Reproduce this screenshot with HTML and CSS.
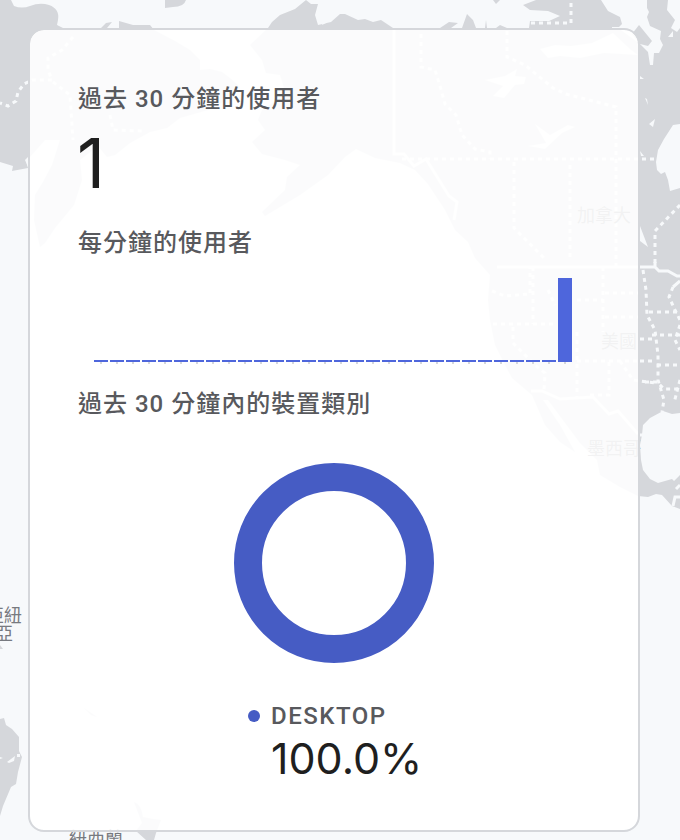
FILE: index.html
```html
<!DOCTYPE html>
<html lang="zh-Hant">
<head>
<meta charset="utf-8">
<title>過去 30 分鐘的使用者</title>
<link rel="stylesheet" href="styles.css">
</head>
<body>
<main class="stage">
  <svg class="map" viewBox="0 0 680 840" aria-hidden="true">
    <g class="land">
      <path d="M0 0H11L14 6Q22 9 30 6Q40 2 49 5Q60 9 58 20L57 25L63 28H101L106 23L112 22L107 28H119V21L133 25H150L154 30L175 41L190 50L200 60V70L210 69L222 72L230 78L240 87L232 97L208 110L180 118L167 128L150 132L130 143L115 155L107 157L98 146L80 160L82 180L74 205L55 228L45 243L40 247L34 220L35 195L43 182L52 165L60 140L45 140L30 157L26 160L28 168L12 171L13 166L0 162Z"/>
      <path d="M165 0H186Q184 7 173 7L165 8Z"/>
      <path d="M268 28L272 22L280 15L295 9L306 0L311 4H318L315 15L318 25L331 22L340 14H345L358 20L365 19L373 22L381 20L393 28H440L449 22L458 23L451 28H462L467 14L473 20L476 28H485L486 20L487 28H496L500 25L507 28H529L530 21H549L560 16L548 11L530 10L523 5L536 0H601L608 11L620 17L622 24L618 28L640 44L648 52L650 65H653L654 53H659L663 45L660 39L661 31L650 26L647 17L649 12L647 8V0H668L667 10L675 20L671 28L677 32L680 28V413L672 414L663 411L650 418L643 425L642 435L640 445L641 460L643 470L650 479L658 483L672 479L674 481L680 475V509L672 506L662 495L656 494L648 497L638 496L620 487L600 475L597 460L580 443L548 400L543 400L560 425L575 452L560 442L545 425L532 395L512 378L505 365L495 345L490 320L488 300L490 275L475 258L468 242L455 230L445 210L428 184L415 170L400 163L375 158L356 149L345 157L328 175L300 195L265 216L262 212L285 190L287 177L300 165L285 160L262 154L252 142L265 130L258 120L262 110L286 94L280 75L266 73L262 60L250 45Z"/>
      <path d="M639 25L652 41L648 46L640 44L632 34Z"/>
      <path d="M493 0H500L496 4ZM0 719L4 718L6 725L12 729L19 737V751L22 757L18 772L16 784L11 787L3 806L0 816ZM0 645L3 649H0Z"/>
      <path d="M134 802Q141 804 143 817L153 819L161 820L156 833L154 840H146L136 831L142 823ZM84 708L97 717L91 715Z"/>
    </g>
    <g class="water">
      <path d="M318 9L325 6L328 11L324 13L320 12ZM325 15L333 18L326 23L322 25ZM330 10L335 14L333 17Z"/>
      <path d="M680 124L673 125L664 139L658 150L656 162L657 170L661 174L665 172L668 180L670 191L680 188Z"/>
      <path d="M673 31V37H668ZM640 76L644 79H640ZM645 98L647 99L648 105ZM649 124L655 119L653 127ZM640 151L644 156H641ZM640 226L648 247L640 241ZM612 27H620V30H612Z"/>
      <path d="M485 80L505 76L517 69L515 76L526 77L524 84L515 85L504 98L493 96L503 86ZM535 124L550 135L568 125L575 127L562 133L545 149L528 146L546 143ZM540 49L555 45L571 46L592 43L613 33L630 49L638 55L604 53L580 58L560 56L548 58Z"/>
      <path d="M0 757L3 758L0 759ZM7 762L15 756L14 761L9 763ZM17 754H20V757H17Z"/>
      <path d="M25 160L28 157V167Z"/>
    </g>
    <g class="border solid">
      <path d="M394 28V154H404L414 166L426 159L449 196L457 202L454 220"/>
      <path d="M497 267H655L659 271L668 271L677 276H680M655 262V267M680 281L673 287"/>
      <path d="M531 391H542L560 399L593 397L609 414L618 411L638 434M640 435H643M673 506L675 497H680M676 489L680 485"/>
    </g>
    <g class="border dotted">
      <path d="M571 3V23H530"/>
      <path d="M421 34V67L435 70L440 86L445 104L456 115L462 135L475 149L490 152V159"/>
      <path d="M507 31V57L525 65L553 88L566 94L616 107V267"/>
      <path d="M402 159H655M514 162V228L546 260M570 165V258M680 205L655 231V263"/>
      <path d="M73 37L62 50L48 58V70L52 80H32L24 84L18 92L16 101L8 106L0 103M53 82L70 95L73 140M110 115L113 130L142 131"/>
      <path d="M643 270L646 290L647 315L655 330L658 355V380L664 400L662 412"/>
      <path d="M649 312H680M652 335H680M640 339H654M640 361H656M657 365H680M645 382H657L664 389H680"/>
      <path d="M673 287L669 297L675 310L680 320M680 325L675 340L680 350M680 380L674 403"/>
      <path d="M492 291L505 296L530 294V267M533 267V324M493 324H555M513 327V343L535 365L545 373L544 390M603 267V332M577 300H603M605 293H640M605 317H640M577 332V398M577 361H640M609 362V395H590M620 361L633 380L655 383M548 290L555 305"/>
    </g>
    <g class="label">
      <text x="577" y="221.500">加拿大</text>
      <text x="601" y="347.500">美國</text>
      <text x="587" y="454.500">墨西哥</text>
      <text x="-50" y="621.500">巴布亞紐</text>
      <text x="-41" y="639.500">幾內亞</text>
      <text x="69" y="845">紐西蘭</text>
    </g>
  </svg>

  <section class="card">
    <h2 class="title">過去 30 分鐘的使用者</h2>
    <div class="total">1</div>
    <h2 class="title">每分鐘的使用者</h2>
    <div class="bars">
      <i></i><i></i><i></i><i></i><i></i><i></i><i></i><i></i><i></i><i></i>
      <i></i><i></i><i></i><i></i><i></i><i></i><i></i><i></i><i></i><i></i>
      <i></i><i></i><i></i><i></i><i></i><i></i><i></i><i></i><i></i><i class="active"></i>
    </div>
    <h2 class="title">過去 30 分鐘內的裝置類別</h2>
    <div class="donut"></div>
    <div class="legend">
      <span class="dot"></span>
      <span class="device">DESKTOP</span>
      <span class="share">100.0%</span>
    </div>
  </section>
</main>
</body>
</html>
```
FILE: styles.css
```css
* { box-sizing: border-box; }
body {
  margin: 0;
  background: #f7f9fb;
  font-family: Roboto, "Noto Sans CJK TC", sans-serif;
}
.stage {
  position: relative;
  width: 680px;
  height: 840px;
  padding: 28px;
  overflow: hidden;
}
.map {
  position: absolute;
  inset: 0;
  width: 680px;
  height: 840px;
}
.land { fill: #d5d7db; }
.water { fill: #f7f9fb; }
.border { fill: none; stroke: #f7f9fb; stroke-width: 3; }
.dotted { stroke-dasharray: 4 4; }
.label {
  font: 18px "Noto Sans CJK TC", sans-serif;
  fill: #777a80;
}
.card {
  position: relative;
  width: 612px;
  height: 804px;
  padding: 51px 48px 0;
  border: 2px solid #d5d7db;
  border-radius: 16px;
  background: rgba(255, 255, 255, .9);
  background-clip: padding-box;
}
.title {
  margin: 0;
  height: 36px;
  font-size: 24px;
  font-weight: 500;
  line-height: 36px;
  letter-spacing: 1px;
  color: #58595d;
  white-space: nowrap;
}
.total {
  height: 108px;
  margin-left: -1px;
  font: 69px/92px Inter, sans-serif;
  color: #1f1f1f;
}
.bars {
  display: flex;
  align-items: flex-end;
  gap: 2px;
  height: 86px;
  margin: 17px 0 22px 16px;
}
.bars i {
  width: 14px;
  height: 4px;
  background:
    linear-gradient(#d5d7db, #d5d7db) 6px 100% / 2px 2px no-repeat,
    linear-gradient(#4e66dc, #4e66dc) 0 0 / 100% calc(100% - 2px) no-repeat;
}
.bars .active { height: 86px; }
.donut {
  width: 200px;
  height: 200px;
  margin: 41px auto 0;
  border: 28px solid #465cc4;
  border-radius: 50%;
}
.legend {
  display: grid;
  grid-template-columns: 12px 1fr;
  column-gap: 11px;
  align-items: center;
  margin: 37px 0 0 170px;
}
.dot {
  width: 12px;
  height: 12px;
  border-radius: 50%;
  background: #465cc4;
}
.device {
  font-size: 24px;
  font-weight: 500;
  line-height: 32px;
  letter-spacing: 1.500px;
  color: #58595d;
}
.share {
  grid-column: 2;
  font: 43px/52px Inter, sans-serif;
  color: #1f1f1f;
}
```
